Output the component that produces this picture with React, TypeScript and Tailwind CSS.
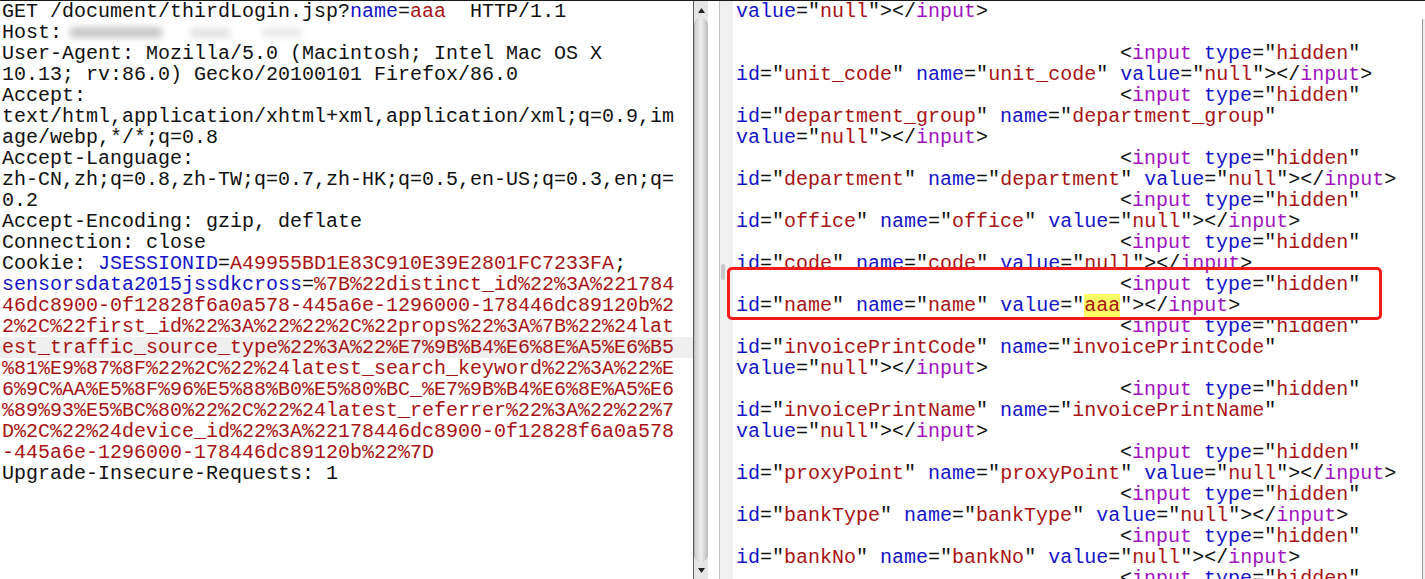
import React from "react";

type Seg = [string, string];

// token colours
const K = "text-[#111111]";
const B = "text-[#1414c8]";
const R = "text-[#a81414]";
const P = "text-[#a014c0]";
const Y = "text-[#a81414] bg-[#ffff66]";

const a = (name: string, val: string, cls = R): Seg[] => [
  [B, name],
  [K, '="'],
  [cls, val],
  [K, '"'],
];

const row = (...parts: Seg[][]): Seg[] =>
  parts.flatMap((p, i) => (i ? [[K, " "] as Seg, ...p] : p));

const close: Seg[] = [
  [K, "></"],
  [P, "input"],
  [K, ">"],
];

const input: Seg[] = [
  [K, " ".repeat(32) + "<"],
  [P, "input"],
  [K, " "],
  ...a("type", "hidden"),
];

const full = (id: string, val = "null", cls = R): Seg[] => [
  ...row(a("id", id), a("name", id), a("value", val, cls)),
  ...close,
];

const requestLines: Seg[][] = [
  [
    [K, "GET /document/thirdLogin.jsp?"],
    [B, "name"],
    [K, "="],
    [R, "aaa"],
    [K, "  HTTP/1.1"],
  ],
  [[K, "Host:"]],
  [[K, "User-Agent: Mozilla/5.0 (Macintosh; Intel Mac OS X"]],
  [[K, "10.13; rv:86.0) Gecko/20100101 Firefox/86.0"]],
  [[K, "Accept:"]],
  [[K, "text/html,application/xhtml+xml,application/xml;q=0.9,im"]],
  [[K, "age/webp,*/*;q=0.8"]],
  [[K, "Accept-Language:"]],
  [[K, "zh-CN,zh;q=0.8,zh-TW;q=0.7,zh-HK;q=0.5,en-US;q=0.3,en;q="]],
  [[K, "0.2"]],
  [[K, "Accept-Encoding: gzip, deflate"]],
  [[K, "Connection: close"]],
  [
    [K, "Cookie: "],
    [B, "JSESSIONID"],
    [K, "="],
    [R, "A49955BD1E83C910E39E2801FC7233FA"],
    [K, ";"],
  ],
  [
    [B, "sensorsdata2015jssdkcross"],
    [K, "="],
    [R, "%7B%22distinct_id%22%3A%221784"],
  ],
  [[R, "46dc8900-0f12828f6a0a578-445a6e-1296000-178446dc89120b%2"]],
  [[R, "2%2C%22first_id%22%3A%22%22%2C%22props%22%3A%7B%22%24lat"]],
  [[R, "est_traffic_source_type%22%3A%22%E7%9B%B4%E6%8E%A5%E6%B5"]],
  [[R, "%81%E9%87%8F%22%2C%22%24latest_search_keyword%22%3A%22%E"]],
  [[R, "6%9C%AA%E5%8F%96%E5%88%B0%E5%80%BC_%E7%9B%B4%E6%8E%A5%E6"]],
  [[R, "%89%93%E5%BC%80%22%2C%22%24latest_referrer%22%3A%22%22%7"]],
  [[R, "D%2C%22%24device_id%22%3A%22178446dc8900-0f12828f6a0a578"]],
  [[R, "-445a6e-1296000-178446dc89120b%22%7D"]],
  [[K, "Upgrade-Insecure-Requests: 1"]],
];

const responseLines: Seg[][] = [
  [...a("value", "null"), ...close],
  [],
  input,
  full("unit_code"),
  input,
  row(a("id", "department_group"), a("name", "department_group")),
  [...a("value", "null"), ...close],
  input,
  full("department"),
  input,
  full("office"),
  input,
  full("code"),
  input,
  full("name", "aaa", Y),
  input,
  row(a("id", "invoicePrintCode"), a("name", "invoicePrintCode")),
  [...a("value", "null"), ...close],
  input,
  row(a("id", "invoicePrintName"), a("name", "invoicePrintName")),
  [...a("value", "null"), ...close],
  input,
  full("proxyPoint"),
  input,
  full("bankType"),
  input,
  full("bankNo"),
  input,
];

function Line({ segs }: { segs: Seg[] }) {
  return (
    <>
      {segs.map(([cls, text], i) => (
        <span key={i} className={cls}>
          {text}
        </span>
      ))}
    </>
  );
}

function Arrow({ up }: { up?: boolean }) {
  return (
    <svg width="7" height="5" viewBox="0 0 7 5">
      <polygon
        points={up ? "3.5,0 7,5 0,5" : "0,0 7,0 3.5,5"}
        fill="#222"
      />
    </svg>
  );
}

function Scrollbar() {
  return (
    <div className="flex w-[15px] shrink-0 flex-col border-l border-[#5a5a5a] bg-[#e6e6e6]">
      <div className="flex h-[18px] items-center justify-center">
        <Arrow up />
      </div>
      <div className="flex-1 rounded-[6px] border-x border-[#b8b8b8] bg-gradient-to-r from-[#cfcfcf] via-[#efefef] to-[#c4c4c4]" />
      <div className="flex h-[18px] items-center justify-center">
        <Arrow />
      </div>
    </div>
  );
}

export default function App() {
  return (
    <div className="relative flex h-[579px] w-[1425px] overflow-hidden border-t border-[#1a1a1a] bg-white font-['Liberation_Mono','Courier_New',monospace] text-[20px] leading-[21px] whitespace-pre">
      {/* Request */}
      <div className="w-[693px] shrink-0">
        {requestLines.map((segs, i) => (
          <div
            key={i}
            className={`h-[21px] pl-[2px] ${i === 16 ? "bg-[#efefef]" : ""}`}
          >
            <Line segs={segs} />
            {i === 1 && (
              // blurred host name
              <span className="ml-[8px] inline-flex items-center align-middle">
                <span className="inline-block h-[11px] w-[92px] rounded-[3px] bg-[#c9c9c9] blur-[3px]" />
                <span className="ml-[28px] inline-block h-[10px] w-[40px] bg-[#e4e4e4] blur-[3px]" />
                <span className="ml-[32px] inline-block h-[9px] w-[40px] bg-[#e9e9e9] blur-[3px]" />
              </span>
            )}
          </div>
        ))}
      </div>
      <Scrollbar />

      <div className="w-[11px] shrink-0" />

      {/* Response */}
      <div className="w-[14px] shrink-0 border-l border-[#c4c4c4] bg-[#f0f0f0]">
        <div className="mt-[263px] ml-[1px] h-[16px] w-[4px] rounded-[2px] bg-[#c8c8c8]" />
      </div>
      <div className="min-w-0 flex-1 pl-[3px]">
        {responseLines.map((segs, i) => (
          <div key={i} className="h-[21px]">
            <Line segs={segs} />
          </div>
        ))}
      </div>
      <div className="mt-[18px] w-[3px] shrink-0 border-l border-[#9a9a9a] bg-[#eeeeee]" />

      {/* Highlight box */}
      <div className="pointer-events-none absolute left-[727px] top-[266px] h-[53px] w-[655px] rounded-[5px] border-[3px] border-[#f51b1b]" />
    </div>
  );
}
